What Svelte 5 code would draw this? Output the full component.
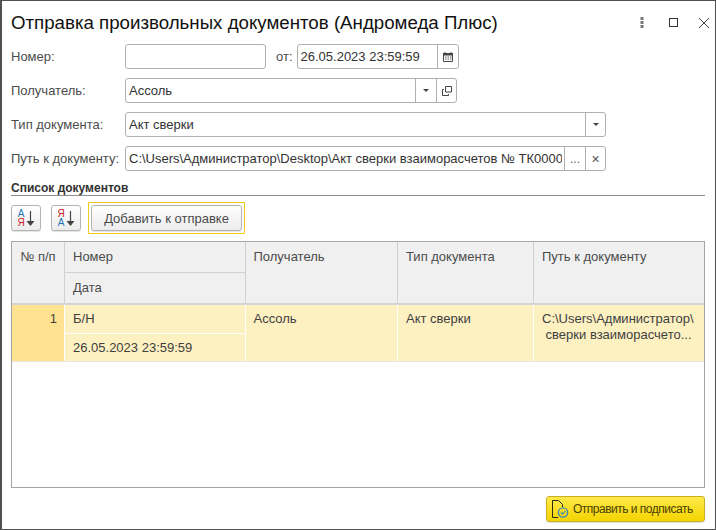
<script>
	const columns = ['Получатель', 'Тип документа', 'Путь к документу'];
</script>

<div class="window">
	<header class="title-row">
		<h1>Отправка произвольных документов (Андромеда Плюс)</h1>
		<div class="win-controls">
			<svg class="ctl-dots" width="4" height="11" viewBox="0 0 4 11"><g fill="#777"><rect x="0.5" y="0" width="3" height="3"/><rect x="0.5" y="4" width="3" height="3"/><rect x="0.5" y="8" width="3" height="3"/></g></svg>
			<svg class="ctl-box" width="9" height="9" viewBox="0 0 9 9"><rect x="0.5" y="0.5" width="8" height="8" fill="none" stroke="#333"/></svg>
			<svg class="ctl-close" width="10" height="10" viewBox="0 0 10 10"><path d="M0 0 10 10M10 0 0 10" stroke="#444" fill="none"/></svg>
		</div>
	</header>

	<section class="form">
		<div class="row">
			<span class="label">Номер:</span>
			<div class="field w-num"></div>
			<span class="from">от:</span>
			<div class="field w-date">
				<span class="value">26.05.2023 23:59:59</span>
				<span class="addon wide">
					<svg width="10" height="10" viewBox="0 0 10 10"><path d="M0.5 1.5h9v8h-9z" fill="#fff" stroke="#444"/><path d="M0 1h10v2.5H0z" fill="#444"/><path d="M2 0v2M8 0v2" stroke="#444"/><path d="M2 5h1.5M4.5 5H6M7 5h1.5M2 7h1.5M4.5 7H6M7 7h1.5" stroke="#555"/></svg>
				</span>
			</div>
		</div>
		<div class="row">
			<span class="label">Получатель:</span>
			<div class="field w-recipient">
				<span class="value">Ассоль</span>
				<span class="addon wide"><i class="caret"></i></span>
				<span class="addon">
					<svg width="10" height="10" viewBox="0 0 10 10" fill="none" stroke="#444"><path d="M3.5 0.5h6v5.5h-6z"/><path d="M2 3.5H0.5v6h6V8"/></svg>
				</span>
			</div>
		</div>
		<div class="row">
			<span class="label">Тип документа:</span>
			<div class="field w-full">
				<span class="value">Акт сверки</span>
				<span class="addon"><i class="caret"></i></span>
			</div>
		</div>
		<div class="row">
			<span class="label">Путь к документу:</span>
			<div class="field w-full">
				<span class="value path-value">C:\Users\Администратор\Desktop\Акт сверки взаиморасчетов № ТК00000000000</span>
				<span class="addon wide dots">...</span>
				<span class="addon x">×</span>
			</div>
		</div>
	</section>

	<div class="section-title">Список документов</div>

	<div class="toolbar">
		<button class="icon-btn" aria-label="Сортировка по возрастанию">
			<span class="letters"><b class="blue">А</b><b class="red">Я</b></span>
			<svg width="9" height="15" viewBox="0 0 9 15"><path d="M4.5 0v11" stroke="#444" stroke-width="1.2"/><path d="M0.5 10h8l-4 5z" fill="#444"/></svg>
		</button>
		<button class="icon-btn" aria-label="Сортировка по убыванию">
			<span class="letters"><b class="red">Я</b><b class="blue">А</b></span>
			<svg width="9" height="15" viewBox="0 0 9 15"><path d="M4.5 0v11" stroke="#444" stroke-width="1.2"/><path d="M0.5 10h8l-4 5z" fill="#444"/></svg>
		</button>
		<div class="focus-ring"><button class="btn">Добавить к отправке</button></div>
	</div>

	<div class="table">
		<div class="head">
			<div class="cell tall center">№ п/п</div>
			<div class="stack">
				<div class="cell">Номер</div>
				<div class="cell">Дата</div>
			</div>
			{#each columns as col}
				<div class="cell tall">{col}</div>
			{/each}
		</div>
		<div class="body-row">
			<div class="cell tall num">1</div>
			<div class="stack">
				<div class="cell">Б/Н</div>
				<div class="cell">26.05.2023 23:59:59</div>
			</div>
			<div class="cell tall">Ассоль</div>
			<div class="cell tall">Акт сверки</div>
			<div class="cell tall path">C:\Users\Администратор\<br />&nbsp;сверки взаиморасчето...</div>
		</div>
	</div>

	<footer class="footer">
		<button class="btn primary">
			<svg width="17" height="19" viewBox="0 0 17 19" fill="none">
				<path d="M6 17.5H0.5V0.5H6.5L10.5 4.5V7" stroke="#2a2a10" stroke-width="1"/>
				<circle cx="11" cy="12.5" r="4.6" stroke="#3f86b8" stroke-width="1.4"/>
				<path d="M8.8 12.5l1.7 1.7 2.7-3" stroke="#3f86b8" stroke-width="1.2"/>
			</svg>
			Отправить и подписать
		</button>
	</footer>
</div>

<style>
	:global(body) {
		margin: 0;
		background: #fff;
	}

	.window {
		box-sizing: border-box;
		width: 716px;
		height: 530px;
		border: 1px solid #505050;
		border-left-width: 2px;
		background: #fff;
		font-family: 'Liberation Sans', Arial, sans-serif;
		font-size: 13px;
		color: #4b4b4b;
		padding: 0 10px 0 9px;
		display: flex;
		flex-direction: column;
		overflow: hidden;
	}

	.title-row {
		height: 43px;
		display: flex;
		justify-content: space-between;
		align-items: center;
		flex: none;
	}

	h1 {
		margin: 0;
		font-size: 18.7px;
		font-weight: 400;
		color: #111;
		white-space: nowrap;
	}

	.win-controls {
		display: flex;
		align-items: center;
		margin-right: -4px;
	}

	.ctl-box {
		margin-left: 25px;
	}

	.ctl-close {
		margin-left: 21px;
	}

	.form {
		display: flex;
		flex-direction: column;
		gap: 9px;
		flex: none;
	}

	.row {
		display: flex;
		align-items: center;
		height: 25px;
	}

	.label {
		width: 114px;
		flex: none;
		white-space: nowrap;
	}

	.from {
		margin: 0 4px 0 10px;
	}

	.field {
		box-sizing: border-box;
		height: 25px;
		display: flex;
		align-items: stretch;
		border: 1px solid #b0b0b0;
		border-radius: 3px;
		background: #fff;
		overflow: hidden;
		color: #333;
	}

	.w-num { width: 141px; }
	.w-date { width: 162px; }
	.w-recipient { width: 332px; }
	.w-full { width: 481px; }

	.value {
		flex: 1;
		min-width: 0;
		padding: 0 1px 0 3px;
		line-height: 23px;
		white-space: nowrap;
		overflow: hidden;
	}

	/* the long path is cut through its last digit, as in 1C */
	.path-value {
		margin-right: 2px;
		letter-spacing: -0.01px;
	}

	.addon {
		box-sizing: border-box;
		flex: none;
		width: 20px;
		border-left: 1px solid #b0b0b0;
		display: flex;
		align-items: center;
		justify-content: center;
		color: #555;
	}

	.addon.wide { width: 21px; }
	.addon.dots { font-size: 12px; }
	.addon.x { font-size: 14px; }

	.caret {
		width: 0;
		height: 0;
		border-left: 3px solid transparent;
		border-right: 3px solid transparent;
		border-top: 3px solid #444;
	}

	.section-title {
		margin-top: 10px;
		height: 14px;
		line-height: 14px;
		font-size: 12px;
		font-weight: 700;
		color: #333;
		border-bottom: 1px solid #8c8c8c;
		flex: none;
	}

	.toolbar {
		display: flex;
		align-items: center;
		gap: 10px;
		height: 32px;
		margin-top: 6px;
		flex: none;
	}

	button {
		font: inherit;
		color: #4b4b4b;
		cursor: default;
		padding: 0;
	}

	.icon-btn,
	.btn {
		box-sizing: border-box;
		height: 26px;
		border: 1px solid #b4b4b4;
		border-radius: 3px;
		background: linear-gradient(#fff, #ececec);
		box-shadow: 0 1px 1px rgba(0, 0, 0, 0.12);
	}

	.icon-btn {
		width: 30px;
		display: flex;
		align-items: center;
		justify-content: center;
		gap: 1px;
	}

	.letters {
		display: flex;
		flex-direction: column;
		font-size: 10px;
		line-height: 9px;
	}

	.letters b { font-weight: 400; }
	.blue { color: #1a76b8; }
	.red { color: #c8222a; }

	.focus-ring {
		box-sizing: border-box;
		margin-left: -3px;
		border: 1px solid #f4cb1c;
		padding: 2px;
		height: 32px;
	}

	.btn {
		display: block;
		width: 151px;
		text-align: center;
	}

	.table {
		box-sizing: border-box;
		height: 247px;
		margin-top: 7px;
		border: 1px solid #a6a6a6;
		flex: none;
		background: #fff;
	}

	.head,
	.body-row {
		display: grid;
		grid-template-columns: 52px 179px 151px 135px 1fr;
		column-gap: 1px;
		background: #d0d0d0;
	}

	.head {
		height: 61px;
		border-bottom: 2px solid #d4d4d4;
	}

	.body-row {
		height: 56px;
		background: #fff;
		border-bottom: 1px solid #e6e6e6;
	}

	.body-row, .head {
		grid-template-columns: 52px 179.5px 151.5px 135px 1fr;
	}

	.stack {
		display: flex;
		flex-direction: column;
		gap: 1px;
	}

	.stack .cell { flex: 1; }

	.cell {
		box-sizing: border-box;
		padding: 6px 7px 0 8px;
		background: #f0f0f0;
		line-height: 17px;
		white-space: nowrap;
		overflow: hidden;
		color: #4b4b4b;
	}

	.body-row .cell {
		padding-top: 5px;
		background: #fdf1c2;
		color: #3f3f3f;
	}

	.body-row .cell.num {
		background: #fee28f;
		text-align: right;
	}

	.center { text-align: center; padding-left: 0; padding-right: 0; }

	.body-row .cell.path {
		line-height: 16px;
		padding-top: 6px;
	}

	.footer {
		display: flex;
		justify-content: flex-end;
		margin-top: 8px;
		flex: none;
	}

	.btn.primary {
		width: 159px;
		height: 26px;
		display: flex;
		align-items: center;
		gap: 4px;
		padding-left: 5px;
		font-size: 12px;
		letter-spacing: -0.5px;
		color: #4a4000;
		border-color: #c9b022;
		background: linear-gradient(#ffe94a, #f4d400);
		white-space: nowrap;
	}
</style>
